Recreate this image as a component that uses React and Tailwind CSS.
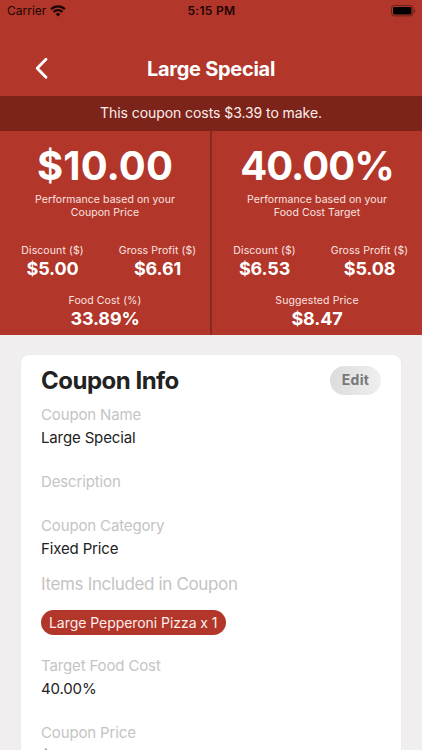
import React from 'react';

const panels = [
    {
        value: '$10.00',
        size: 'text-[40px] tracking-[0.1px]',
        target: 'Coupon Price',
        discount: '$5.00',
        profit: '$6.61',
        label: 'Food Cost (%)',
        result: '33.89%',
    },
    {
        value: '40.00%',
        size: 'text-[40px] tracking-[-1px]',
        target: 'Food Cost Target',
        discount: '$6.53',
        profit: '$5.08',
        label: 'Suggested Price',
        result: '$8.47',
    },
];

function StatusBar() {
    return (
        <div className="grid grid-cols-3 items-center h-[22px] pl-[7px] pr-[6px] text-[12px] leading-[22px] text-[#1d0504]">
            <div className="flex items-center gap-[4px]">
                <span>Carrier</span>
                <svg width="16" height="12" viewBox="0 0 16 12" fill="none" stroke="currentColor" strokeWidth="2.3">
                    <path d="M1.1 4.2a9.8 9.8 0 0 1 13.8 0" />
                    <path d="M3.5 6.9a6.4 6.4 0 0 1 9 0" />
                    <path d="M8 11.6 5.6 9.1a3.4 3.4 0 0 1 4.8 0z" fill="currentColor" stroke="none" />
                </svg>
            </div>
            <span className="text-center font-semibold tracking-[0.3px]">5:15 PM</span>
            <svg className="justify-self-end" width="25" height="12" viewBox="0 0 25 12">
                <rect x="0.5" y="0.5" width="21.5" height="10.4" rx="2.8" fill="none" stroke="#000" strokeOpacity="0.4" />
                <rect x="2" y="2" width="18.5" height="7.4" rx="1.4" fill="#000" />
                <path d="M23.2 3.9c1.3.5 1.3 3.1 0 3.6z" fill="#000" fillOpacity="0.5" />
            </svg>
        </div>
    );
}

function Stat({ label, value }) {
    return (
        <div className="flex flex-col items-center whitespace-nowrap">
            <span className="text-[10.5px] leading-[17px] tracking-[0.1px] text-[#fbe3e0]">{label}</span>
            <span className="text-[18px] leading-[19px] tracking-[-0.15px] font-bold">{value}</span>
        </div>
    );
}

function Panel({ panel }) {
    return (
        <div className="flex-1 text-center">
            <div className={`mt-[11px] h-[48px] leading-[48px] font-bold ${panel.size}`}>{panel.value}</div>
            <p className="mt-[4px] text-[10.5px] leading-[12.5px] tracking-[0.06px] text-[#fbe3e0]">
                Performance based on your
                <br />
                {panel.target}
            </p>
            <div className="mt-[23px] grid grid-cols-2">
                <Stat label="Discount ($)" value={panel.discount} />
                <Stat label="Gross Profit ($)" value={panel.profit} />
            </div>
            <div className="mt-[14px]">
                <Stat label={panel.label} value={panel.result} />
            </div>
        </div>
    );
}

function Field({ label, value }) {
    return (
        <div>
            <div className="text-[15px] leading-[22px] tracking-[-0.14px] text-[#c4c4c4]">{label}</div>
            <div className="h-[24px] text-[15px] leading-[24px] tracking-[-0.14px] text-[#222]">{value}</div>
        </div>
    );
}

export default function App() {
    return (
        <div className="w-full h-[750px] flex flex-col overflow-hidden bg-[#f0eeef] font-['Inter','Liberation_Sans',sans-serif]">
            <header className="h-[96px] shrink-0 bg-[#b23629]">
                <StatusBar />
                <div className="grid grid-cols-[64px_1fr_64px] items-start h-[64px] mt-[14px] text-white">
                    <svg className="justify-self-end mr-[14px] mt-[20px]" width="16" height="24" viewBox="0 0 16 24" fill="none" stroke="currentColor" strokeWidth="2.9">
                        <path d="M12 3.2 3.2 12.2l8.8 9" strokeLinecap="round" strokeLinejoin="round" />
                    </svg>
                    <h1 className="mt-[21px] text-center text-[20px] leading-[25px] font-bold tracking-[-0.27px]">Large Special</h1>
                </div>
            </header>

            <div className="h-[35px] shrink-0 bg-[#7c2419] text-center text-[14px] leading-[34px] tracking-[-0.07px] text-[#fdeeec]">
                This coupon costs $3.39 to make.
            </div>

            <section className="flex h-[204px] shrink-0 bg-[#b23629] text-white">
                <Panel panel={panels[0]} />
                <div className="w-[2px] bg-[#882a1f]" />
                <Panel panel={panels[1]} />
            </section>

            {/* Coupon details */}
            <main className="mt-[20px] mx-[21px] h-[560px] shrink-0 rounded-[8px] bg-white px-[20px] pt-[10px] shadow-[0_0_2px_rgba(0,0,0,0.06)]">
                <div className="flex items-center justify-between h-[30px]">
                    <h2 className="mt-[2px] text-[24px] leading-[30px] font-bold tracking-[-0.5px] text-[#222]">Coupon Info</h2>
                    <button className="h-[29px] w-[51px] rounded-full bg-linear-to-r from-[#dcdcdc] to-[#efefef] pb-[2px] text-[14px] font-bold tracking-[0.3px] text-[#777]">Edit</button>
                </div>
                <div className="mt-[9px] flex flex-col gap-[21px]">
                    <Field label="Coupon Name" value="Large Special" />
                    <Field label="Description" value="" />
                </div>
                <div className="mt-[-2px]">
                    <Field label="Coupon Category" value="Fixed Price" />
                </div>
                <div className="mt-[11px] text-[17px] leading-[24px] tracking-[-0.35px] text-[#c4c4c4]">Items Included in Coupon</div>
                <div className="mt-[14px] flex">
                    <span className="h-[25px] rounded-full bg-[#b23629] px-[8px] text-[14px] leading-[25px] tracking-[-0.05px] text-[#fdeeec]">Large Pepperoni Pizza x 1</span>
                </div>
                <div className="mt-[20px] flex flex-col gap-[21px]">
                    <Field label="Target Food Cost" value="40.00%" />
                    <Field label="Coupon Price" value="$10.00" />
                </div>
            </main>
        </div>
    );
}
